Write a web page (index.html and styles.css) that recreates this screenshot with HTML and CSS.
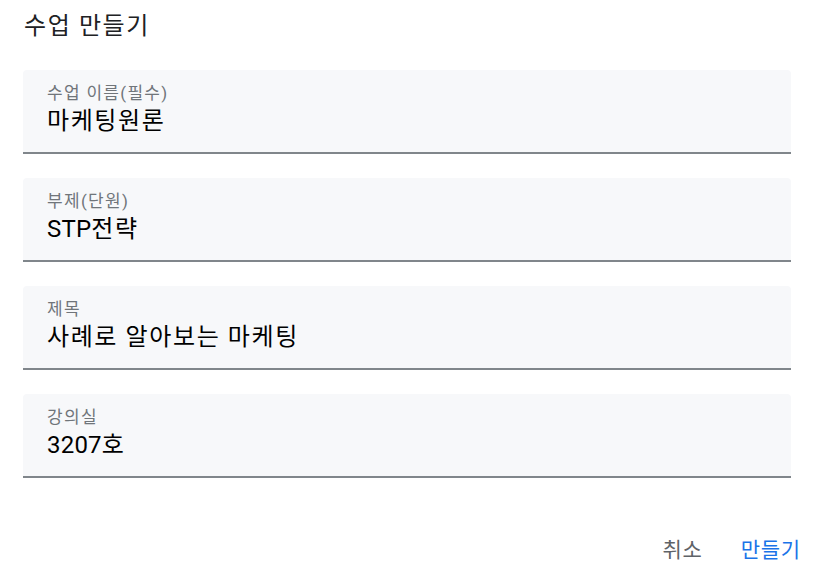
FILE: index.html
```html
<!DOCTYPE html>
<html lang="ko">
<head>
<meta charset="utf-8">
<link rel="stylesheet" href="styles.css">
</head>
<body>
<div class="dialog">
  <h1 class="title">수업 만들기</h1>
  <div class="fields">
    <div class="field">
      <div class="label">수업 이름(필수)</div>
      <div class="value">마케팅원론</div>
    </div>
    <div class="field">
      <div class="label">부제(단원)</div>
      <div class="value"><span class="latin">STP</span>전략</div>
    </div>
    <div class="field">
      <div class="label">제목</div>
      <div class="value">사례로 알아보는 마케팅</div>
    </div>
    <div class="field">
      <div class="label">강의실</div>
      <div class="value"><span class="latin">3207</span>호</div>
    </div>
  </div>
  <div class="actions">
    <button class="btn cancel">취소</button>
    <button class="btn create">만들기</button>
  </div>
</div>
</body>
</html>
```
FILE: styles.css
```css
html, body {
  margin: 0;
  padding: 0;
  background: #ffffff;
}
body {
  font-family: Roboto, "Noto Sans CJK KR", sans-serif;
  color: #202124;
}
.dialog {
  padding: 10px 0 0 23px;
}
.title {
  margin: 0 0 0 1px;
  font-size: 24px;
  font-weight: 400;
  line-height: 32px;
  letter-spacing: 1.6px;
}
.fields {
  margin-top: 28px;
  display: flex;
  flex-direction: column;
  gap: 24px;
  width: 768px;
}
.field {
  background: #f7f8fa;
  border-radius: 4px 4px 0 0;
  border-bottom: 2px solid #80868b;
  padding: 12px 24px 0 24px;
  box-sizing: content-box;
  height: 70px;
}
.label {
  font-size: 17px;
  line-height: 22px;
  letter-spacing: 1.3px;
  color: #70757a;
}
.value {
  margin-top: 3px;
  font-size: 24px;
  line-height: 28px;
  letter-spacing: 1.6px;
  color: #000000;
}
.latin {
  letter-spacing: 0.2px;
}
.actions {
  display: flex;
  justify-content: flex-end;
  gap: 14px;
  margin-top: 54px;
  margin-right: 0;
}
.btn {
  border: none;
  background: none;
  font-family: Roboto, "Noto Sans CJK KR", sans-serif;
  font-size: 21px;
  letter-spacing: 0.8px;
  padding: 4px 12px;
  line-height: 28px;
  cursor: pointer;
}
.cancel { color: #5f6368; }
.create { color: #1a73e8; }
```
